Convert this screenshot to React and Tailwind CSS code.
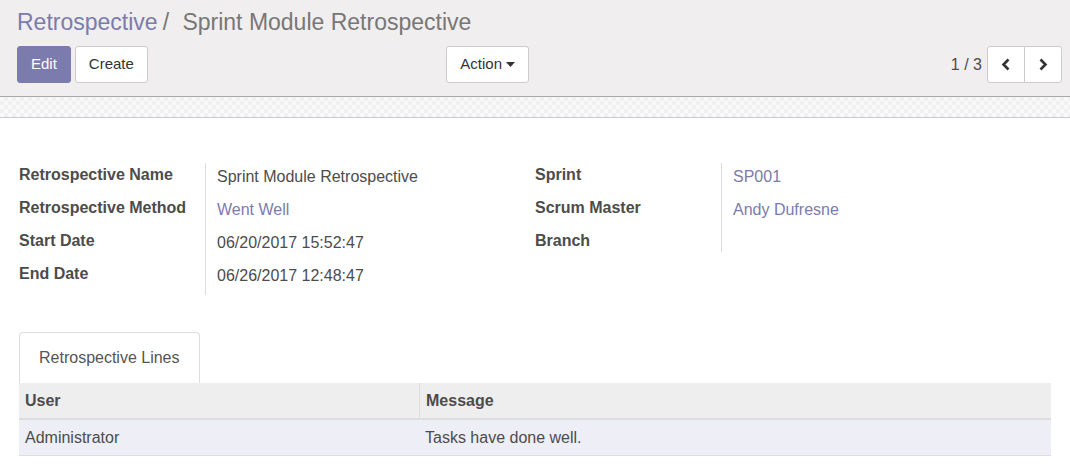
import React from 'react';

const LEFT_FIELDS = [
  { label: 'Retrospective Name', value: 'Sprint Module Retrospective' },
  { label: 'Retrospective Method', value: 'Went Well', link: true },
  { label: 'Start Date', value: '06/20/2017 15:52:47' },
  { label: 'End Date', value: '06/26/2017 12:48:47' },
];

const RIGHT_FIELDS = [
  { label: 'Sprint', value: 'SP001', link: true },
  { label: 'Scrum Master', value: 'Andy Dufresne', link: true },
  { label: 'Branch', value: '' },
];

function Chevron({ dir }) {
  const points = dir === 'left' ? '7.5,1.5 2.5,6.5 7.5,11.5' : '2.5,1.5 7.5,6.5 2.5,11.5';
  return (
    <svg width="10" height="13" viewBox="0 0 10 13">
      <polyline points={points} fill="none" stroke="#333" strokeWidth="2.6" strokeLinejoin="miter" />
    </svg>
  );
}

function FieldGroup({ fields }) {
  return (
    <div className="grid grid-cols-[187px_1fr] w-[516px]">
      {fields.map((f) => (
        <React.Fragment key={f.label}>
          <div className={`border-r border-[#dcdcdc] font-bold text-[#4c4c4c] leading-[23px] ${f.value ? 'pb-[10px]' : ''}`}>
            {f.label}
          </div>
          <div className={`pl-[11px] leading-[23px] pt-[2px] ${f.link ? 'text-[#7c7bad]' : 'text-[#4c4c4c]'}`}>
            {f.value}
          </div>
        </React.Fragment>
      ))}
    </div>
  );
}

export default function App() {
  return (
    <div className="w-[1070px] h-[466px] bg-white font-['Liberation_Sans',Arial,sans-serif] text-[16px] text-[#4c4c4c] overflow-hidden">
      {/* control panel */}
      <div className="bg-[#f0eeee] border-b border-[#a9a9a9] pl-[17px] pr-[8px] pt-[7px] pb-[13px]">
        <div className="text-[23px] leading-[30px] flex items-center">
          <span className="text-[#7c7bad]">Retrospective</span>
          <span className="text-[#777] pl-[5px] pr-[7px]">/&nbsp;</span>
          <span className="text-[#777]">Sprint Module Retrospective</span>
        </div>
        <div className="flex items-center mt-[9px]">
          <div className="flex items-center justify-between w-[512px]">
            <div className="flex gap-[4px]">
              <button className="h-[37px] px-[13px] rounded-[3px] bg-[#7c7bad] border border-[#7c7bad] text-white text-[15px]">
                Edit
              </button>
              <button className="h-[37px] px-[13px] rounded-[3px] bg-white border border-[#cccccc] text-[#333] text-[15px]">
                Create
              </button>
            </div>
            <button className="h-[37px] pl-[13px] pr-[13px] rounded-[3px] bg-white border border-[#cccccc] text-[#333] text-[15px] flex items-center gap-[4px]">
              Action
              <svg width="9" height="5" viewBox="0 0 9 5">
                <polygon points="0,0 9,0 4.5,5" fill="#333" />
              </svg>
            </button>
          </div>
          <div className="ml-auto flex items-center gap-[5px]">
            <span className="text-[#4c4c4c]">1 / 3</span>
            <div className="flex h-[37px] border border-[#cccccc] rounded-[3px] bg-white">
              <button className="w-[37px] flex items-center justify-center border-r border-[#cccccc]">
                <Chevron dir="left" />
              </button>
              <button className="w-[36px] flex items-center justify-center">
                <Chevron dir="right" />
              </button>
            </div>
          </div>
        </div>
      </div>

      {/* stripe */}
      <div className="h-[21px] border-b border-[#c8c8d2] bg-[repeating-conic-gradient(#f1f1f1_0%_25%,#f9f9f9_0%_50%)] bg-[length:8px_8px]" />

      {/* sheet */}
      <div className="pl-[19px] pr-[19px] pt-[45px]">
        <div className="flex items-start">
          <FieldGroup fields={LEFT_FIELDS} />
          <FieldGroup fields={RIGHT_FIELDS} />
        </div>

        <div className="mt-[37px]">
          <div className="flex">
            <div className="h-[51px] px-[19px] flex items-center border border-b-0 border-[#dddddd] rounded-t-[4px] bg-white text-[#555]">
              Retrospective Lines
            </div>
          </div>
          <div className="grid grid-cols-[400px_1fr]">
            <div className="h-[37px] bg-[#eeeeee] border-b-2 border-[#dddddd] px-[6px] flex items-center font-bold">
              User
            </div>
            <div className="h-[37px] bg-[#eeeeee] border-b-2 border-l border-[#dddddd] px-[6px] flex items-center font-bold">
              Message
            </div>
            <div className="h-[36px] bg-[#eeeef6] border-b border-[#dddddd] px-[6px] flex items-center">
              Administrator
            </div>
            <div className="h-[36px] bg-[#eeeef6] border-b border-[#dddddd] px-[6px] flex items-center">
              Tasks have done well.
            </div>
          </div>
        </div>
      </div>
    </div>
  );
}
